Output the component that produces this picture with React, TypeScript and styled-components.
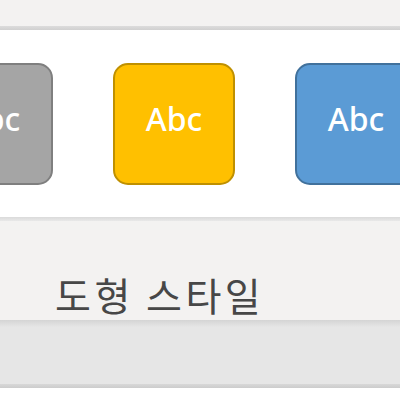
import React from "react";
import styled, { createGlobalStyle } from "styled-components";

const Global = createGlobalStyle`
  html, body { margin: 0; padding: 0; background: #ffffff; }
  body { width: 400px; height: 400px; overflow: hidden; font-family: "Open Sans", "Noto Sans CJK KR", sans-serif; }
`;

const Page = styled.div`
  display: flex;
  flex-direction: column;
  width: 400px;
  height: 400px;
  overflow: hidden;
`;

const TopBar = styled.div`
  height: 26px;
  background: #f3f2f1;
`;

const Rule = styled.div<{ $h: number; $from: string; $to: string }>`
  height: ${(p) => p.$h}px;
  background: linear-gradient(${(p) => p.$from}, ${(p) => p.$to});
`;

const Gallery = styled.div`
  height: 187px;
  background: #ffffff;
  display: flex;
  align-items: flex-start;
  gap: 60px;
  padding-top: 33px;
  margin-left: -69px;
  box-sizing: border-box;
`;

const StyleBox = styled.div<{ $bg: string; $border: string }>`
  flex: none;
  width: 122px;
  height: 122px;
  box-sizing: border-box;
  border-radius: 15px;
  background: ${(p) => p.$bg};
  border: 2px solid ${(p) => p.$border};
  display: flex;
  align-items: center;
  justify-content: center;
  color: #ffffff;
  font-family: "Noto Sans", "Open Sans", sans-serif;
  font-weight: 500;
  font-size: 32px;
  padding-bottom: 12px;
`;

const LabelArea = styled.div`
  height: 99px;
  background: #f3f2f1;
  display: flex;
  align-items: flex-end;
  padding-left: 55px;
  padding-bottom: 6px;
  box-sizing: border-box;
`;

const Label = styled.span`
  font-family: "Noto Sans CJK KR", sans-serif;
  font-size: 39px;
  font-weight: 400;
  color: #474747;
  letter-spacing: 3.5px;
  line-height: 1;
`;

const Band = styled.div`
  height: 57px;
  background: #e6e6e6;
`;

const Bottom = styled.div`
  flex: 1;
  background: #ffffff;
`;

const boxes = [
  { bg: "#a5a5a5", border: "#7f7f7f" },
  { bg: "#ffc000", border: "#bf9000" },
  { bg: "#5b9bd5", border: "#41719c" },
];

export default function App() {
  return (
    <Page>
      <Global />
      <TopBar />
      <Rule $h={4} $from="#dcdcdc" $to="#d0d0d0" />
      <Gallery>
        {boxes.map((b, i) => (
          <StyleBox key={i} $bg={b.bg} $border={b.border}>
            Abc
          </StyleBox>
        ))}
      </Gallery>
      <Rule $h={4} $from="#dadada" $to="#e8e8e8" />
      <LabelArea>
        <Label>도형 스타일</Label>
      </LabelArea>
      <Rule $h={7} $from="#d4d4d4" $to="#e6e6e6" />
      <Band />
      <Rule $h={4} $from="#d8d8d8" $to="#cccccc" />
      <Bottom />
    </Page>
  );
}
